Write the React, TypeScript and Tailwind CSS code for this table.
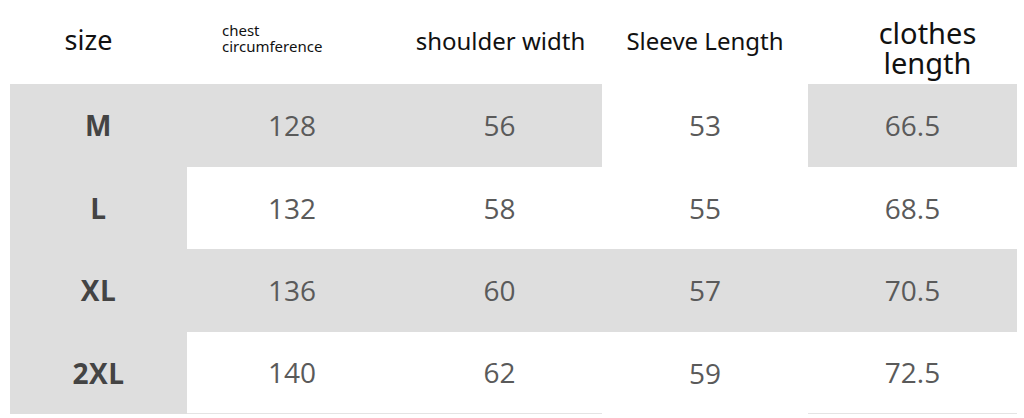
const rows = [
  { size: 'M', values: ['128', '56', '53', '66.5'], grey: [true, true, true, false, true] },
  { size: 'L', values: ['132', '58', '55', '68.5'], grey: [true, false, false, false, false] },
  { size: 'XL', values: ['136', '60', '57', '70.5'], grey: [true, true, true, true, true] },
  { size: '2XL', values: ['140', '62', '59', '72.5'], grey: [true, false, false, false, false] },
];

const widths = ['w-[177px]', 'w-[210px]', 'w-[205px]', 'w-[206px]', 'w-[209px]'];

export default function App() {
  return (
    <div className="w-[1024px] h-[418px] bg-white overflow-hidden pl-[10px]">
      {/* header */}
      <div className="flex h-[84px] text-[#111] font-['Noto_Sans',sans-serif]">
        <div className={`${widths[0]} flex items-center justify-center pr-[20px] pb-[4px] text-[27px]`}>size</div>
        <div className={`${widths[1]} flex flex-col justify-center pl-[35px] pb-[8px] text-[15px] leading-[16px]`}>
          <span>chest</span>
          <span>circumference</span>
        </div>
        <div className={`${widths[2]} flex items-center justify-center pl-[2px] pb-[2px] text-[24px]`}>shoulder width</div>
        <div className={`${widths[3]} flex items-center justify-center pb-[2px] text-[24px]`}>Sleeve Length</div>
        <div className={`${widths[4]} flex flex-col items-center justify-center pl-[30px] pt-[12px] text-[29px] leading-[30px]`}>
          <span>clothes</span>
          <span>length</span>
        </div>
      </div>
      {/* body */}
      {rows.map((row, r) => (
        <div key={row.size} className="flex h-[82.5px] font-['Open_Sans',sans-serif]">
          <div className={`${widths[0]} bg-[#dedede] flex items-center justify-center text-[28px] font-bold text-[#444] tracking-[0.5px]`}>
            {row.size}
          </div>
          {row.values.map((v, i) => (
            <div
              key={i}
              className={`${widths[i + 1]} flex items-center justify-center text-[28px] text-[#5a5a5a] ${
                row.grey[i + 1] ? 'bg-[#dedede]' : 'bg-white'
              } ${r === rows.length - 1 && i !== 2 ? 'border-b border-[#e4e4e4]' : ''}`}
            >
              {v}
            </div>
          ))}
        </div>
      ))}
    </div>
  );
}
